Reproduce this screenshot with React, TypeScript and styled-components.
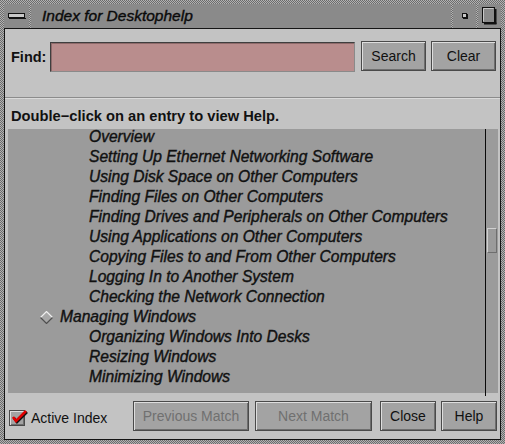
import React from 'react';
import styled, { createGlobalStyle } from 'styled-components';

const Global = createGlobalStyle`
  html, body { margin: 0; padding: 0; background: #808080; }
  body { font-family: "Liberation Sans", Arial, Helvetica, sans-serif; }
`;

const stipple = 'repeating-conic-gradient(#b2b2b2 0% 25%, #6c6c6c 0% 50%) 0 0 / 2px 2px';

const Window = styled.div`
  width: 505px;
  height: 444px;
  box-sizing: border-box;
  padding: 4px;
  background: ${stipple};
  display: flex;
  flex-direction: column;
`;

const TitleBar = styled.div`
  height: 24px;
  flex-shrink: 0;
  display: flex;
  gap: 2px;
`;

const TitleSeg = styled.div<{ $w?: number }>`
  ${(p) => (p.$w ? `width: ${p.$w}px;` : 'flex: 1;')}
  background: #8a8a8a;
  display: flex;
  align-items: center;
  justify-content: center;
`;

const TitleText = styled.div`
  flex: 1;
  background: #8a8a8a;
  padding-left: 11px;
  display: flex;
  align-items: center;
  font-style: italic;
  font-size: 15.5px;
  -webkit-text-stroke: 0.4px #0a0a0a;
  color: #0a0a0a;
`;

const Content = styled.div`
  flex: 1;
  background: #c3c3c3;
  border: 1px solid #151515;
  display: flex;
  flex-direction: column;
  min-height: 0;
`;

const FindRow = styled.div`
  margin-top: 12px;
  height: 30px;
  padding: 0 3px 0 6px;
  display: flex;
  align-items: center;
`;

const FindLabel = styled.label`
  font-weight: bold;
  font-size: 14.5px;
  color: #111;
  width: 39px;
  margin-top: 2px;
`;

const FindInput = styled.div`
  width: 305px;
  height: 30px;
  box-sizing: border-box;
  margin-top: 2px;
  background: #b98d8d;
  border: 1px solid;
  border-color: #3e3e3e #8a8a8a #8a8a8a #3e3e3e;
  box-shadow: inset 1px 1px 0 #8e6a6a;
`;

const Button = styled.button<{ $w: number; $disabled?: boolean }>`
  width: ${(p) => p.$w}px;
  height: 30px;
  box-sizing: border-box;
  padding: 0;
  background: #a3a3a3;
  border: 1px solid #4a4a4a;
  box-shadow: inset 1px 1px 0 #dedede, inset -1px -1px 0 #6e6e6e;
  font-family: "Liberation Sans", Arial, sans-serif;
  font-size: 14px;
  color: ${(p) => (p.$disabled ? '#707070' : '#111')};
`;

const SearchGroup = styled.div`
  display: flex;
  gap: 5px;
  margin-left: 6px;
`;

const Separator = styled.div`
  margin-top: 26px;
  height: 0;
  border-top: 1px solid #8c8c8c;
  border-bottom: 1px solid #dadada;
`;

const HelpLabel = styled.div`
  height: 30px;
  box-sizing: border-box;
  padding: 4px 0 0 6px;
  line-height: 26px;
  font-weight: bold;
  font-size: 14.7px;
  color: #111;
`;

const ListBox = styled.div`
  height: 264px;
  margin: 0 2px 0 3px;
  background: #9b9b9b;
  display: flex;
  overflow: visible;
`;

const ListBody = styled.div`
  flex: 1;
  overflow: hidden;
`;

const ListInner = styled.div`
  margin-top: -2px;
`;

const Row = styled.div<{ $level: number }>`
  height: 20px;
  display: flex;
  align-items: center;
  padding-left: ${(p) => (p.$level === 1 ? 32 : 81)}px;
  gap: 7px;
  font-style: italic;
  font-size: 15.6px;
  -webkit-text-stroke: 0.4px #111;
  color: #111;
  white-space: nowrap;
`;

const ScrollBar = styled.div`
  width: 12px;
  border-left: 1px solid #0a0a0a;
  margin-bottom: -3px;
  position: relative;
`;

const Thumb = styled.div<{ $top: number }>`
  position: absolute;
  left: 1px;
  top: ${(p) => p.$top}px;
  width: 10px;
  height: 25px;
  box-sizing: border-box;
  border: 1px solid;
  border-color: #d0d0d0 #6e6e6e #6e6e6e #d0d0d0;
  background: #9b9b9b;
`;

const BottomRow = styled.div`
  margin-top: 8px;
  height: 30px;
  padding: 0 3px 0 4px;
  display: flex;
  align-items: center;
`;

const CheckWrap = styled.div`
  display: flex;
  align-items: center;
  gap: 6px;
  margin-top: 4px;
`;

const CheckBox = styled.div`
  width: 16px;
  height: 16px;
  box-sizing: border-box;
  background: #a3a3a3;
  border: 1px solid #4a4a4a;
  box-shadow: inset 1px 1px 0 #dedede, inset -1px -1px 0 #6e6e6e;
  position: relative;
`;

const CheckMark = styled.svg`
  position: absolute;
  left: 1px;
  top: -2px;
  overflow: visible;
`;

const CheckLabel = styled.span`
  font-size: 14px;
  color: #111;
`;

const MatchGroup = styled.div`
  display: flex;
  gap: 6px;
  margin-left: auto;
`;

const ActionGroup = styled.div`
  display: flex;
  gap: 5px;
  margin-left: 8px;
`;

const Diamond = () => (
  <svg width="13" height="13" viewBox="0 0 13 13">
    <polygon points="6.5,0.5 12.5,6.5 6.5,12.5 0.5,6.5" fill="#a8a8a8" />
    <polyline points="0.5,6.5 6.5,0.5 12.5,6.5" fill="none" stroke="#f0f0f0" strokeWidth="1.2" />
    <polyline points="0.5,6.5 6.5,12.5 12.5,6.5" fill="none" stroke="#505050" strokeWidth="1.2" />
  </svg>
);

type Entry = { level: number; text: string };

const entries: Entry[] = [
  { level: 2, text: 'Overview' },
  { level: 2, text: 'Setting Up Ethernet Networking Software' },
  { level: 2, text: 'Using Disk Space on Other Computers' },
  { level: 2, text: 'Finding Files on Other Computers' },
  { level: 2, text: 'Finding Drives and Peripherals on Other Computers' },
  { level: 2, text: 'Using Applications on Other Computers' },
  { level: 2, text: 'Copying Files to and From Other Computers' },
  { level: 2, text: 'Logging In to Another System' },
  { level: 2, text: 'Checking the Network Connection' },
  { level: 1, text: 'Managing Windows' },
  { level: 2, text: 'Organizing Windows Into Desks' },
  { level: 2, text: 'Resizing Windows' },
  { level: 2, text: 'Minimizing Windows' },
];

export default function App() {
  return (
    <>
      <Global />
      <Window>
        <TitleBar>
          <TitleSeg $w={25}>
            <svg width="18" height="6" viewBox="0 0 18 6">
              <rect x="0.5" y="0.5" width="16" height="4" fill="#c8c8c8" stroke="#111" />
              <line x1="1" y1="5.5" x2="18" y2="5.5" stroke="#111" />
            </svg>
          </TitleSeg>
          <TitleText>Index for Desktophelp</TitleText>
          <TitleSeg $w={23}>
            <svg width="6" height="6" viewBox="0 0 6 6">
              <rect x="0.5" y="0.5" width="4" height="4" fill="#c8c8c8" stroke="#111" />
              <line x1="1" y1="5.5" x2="6" y2="5.5" stroke="#111" />
              <line x1="5.5" y1="1" x2="5.5" y2="6" stroke="#111" />
            </svg>
          </TitleSeg>
          <TitleSeg $w={23}>
            <svg width="15" height="18" viewBox="0 0 15 18">
              <rect x="0.5" y="0.5" width="12" height="15" fill="#8a8a8a" stroke="#111" />
              <line x1="1.5" y1="1.5" x2="11.5" y2="1.5" stroke="#c8c8c8" />
              <line x1="1.5" y1="1.5" x2="1.5" y2="14.5" stroke="#c8c8c8" />
              <line x1="13.5" y1="2" x2="13.5" y2="17" stroke="#111" strokeWidth="2" />
              <line x1="2" y1="16.5" x2="14.5" y2="16.5" stroke="#111" strokeWidth="2" />
            </svg>
          </TitleSeg>
        </TitleBar>
        <Content>
          <FindRow>
            <FindLabel>Find:</FindLabel>
            <FindInput />
            <SearchGroup>
              <Button $w={65}>Search</Button>
              <Button $w={65}>Clear</Button>
            </SearchGroup>
          </FindRow>
          <Separator />
          <HelpLabel>Double−click on an entry to view Help.</HelpLabel>
          <ListBox>
            <ListBody>
              <ListInner>
                {entries.map((e, i) => (
                  <Row key={i} $level={e.level}>
                    {e.level === 1 && <Diamond />}
                    {e.text}
                  </Row>
                ))}
              </ListInner>
            </ListBody>
            <ScrollBar>
              <Thumb $top={99} />
            </ScrollBar>
          </ListBox>
          <BottomRow>
            <CheckWrap>
              <CheckBox>
                <CheckMark width="16" height="16" viewBox="0 0 16 16">
                  <polyline points="2,8 5,12 15,2" fill="none" stroke="#111" strokeWidth="2.6" transform="translate(1,1)" />
                  <polyline points="2,8 5,12 15,2" fill="none" stroke="#e00000" strokeWidth="2.6" />
                </CheckMark>
              </CheckBox>
              <CheckLabel>Active Index</CheckLabel>
            </CheckWrap>
            <MatchGroup>
              <Button $w={116} $disabled>Previous Match</Button>
              <Button $w={117} $disabled>Next Match</Button>
            </MatchGroup>
            <ActionGroup>
              <Button $w={56}>Close</Button>
              <Button $w={56}>Help</Button>
            </ActionGroup>
          </BottomRow>
        </Content>
      </Window>
    </>
  );
}
